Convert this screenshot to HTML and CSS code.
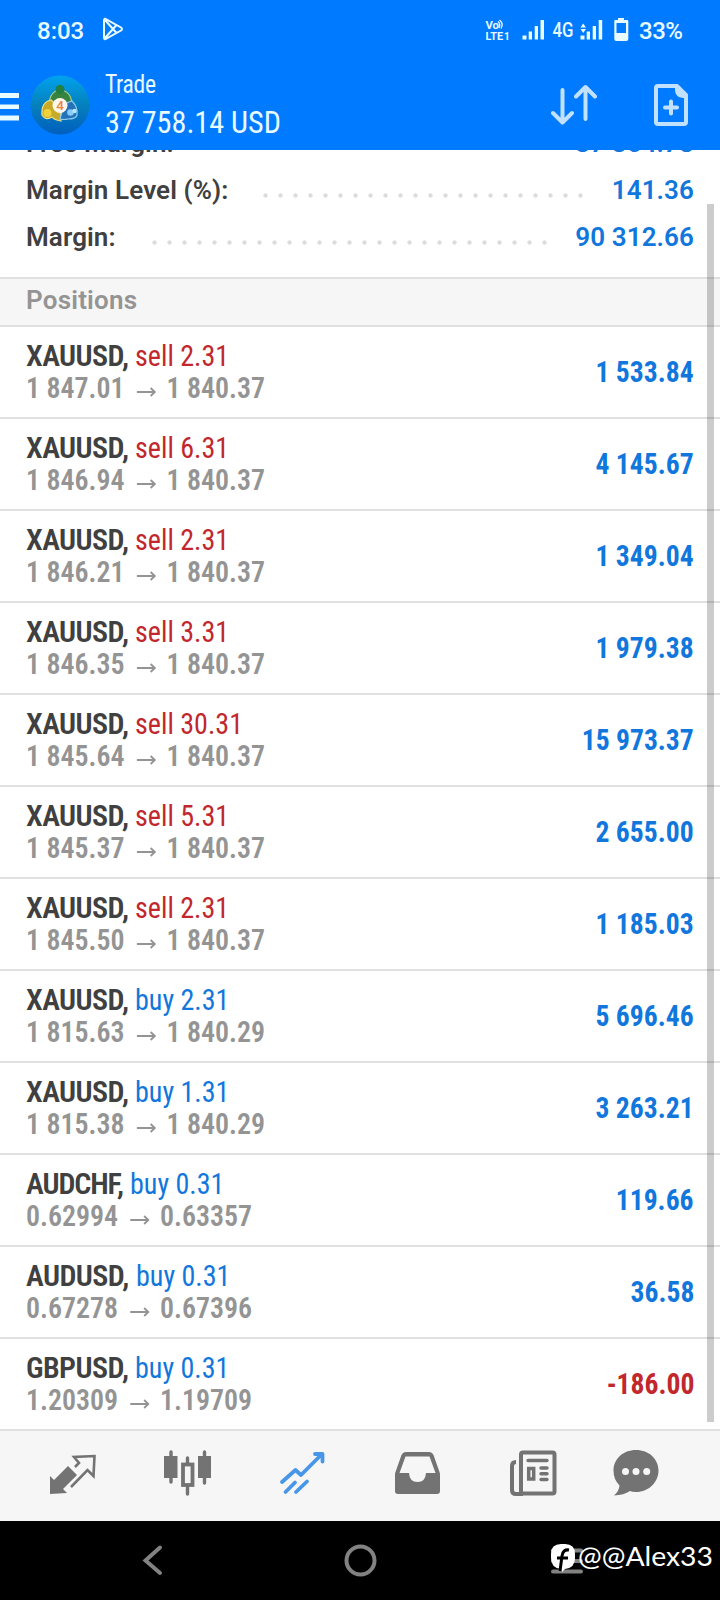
FILE: index.html
```html
<!DOCTYPE html>
<html lang="en"><head><meta charset="utf-8"><title>Trade</title><link rel="stylesheet" href="styles.css"></head>
<body>
<header class="header">
  <div class="status">
    <span class="clock">8:03</span>
    <svg class="play" width="22" height="24" viewBox="0 0 22 24"><path d="M2 3.500v17q0 2.500 2.300 1.200L19 13.500q2-1.500 0-3L4.300 2.300Q2 1 2 3.500zM3 3l11.500 13M3 21 14.500 8"/></svg>
    <svg class="signals" width="150" height="30" viewBox="0 0 150 30">
      <g font-family="Roboto, sans-serif" font-weight="700" font-size="11.500"><text x="0.500" y="13.500" textLength="13.500" lengthAdjust="spacingAndGlyphs">Vo</text><text x="0.500" y="24.500" textLength="17.500" lengthAdjust="spacingAndGlyphs">LTE</text><text x="19" y="24.500" font-size="10">1</text></g>
      <path d="M13 6.500q3 3 1 6.500M14.500 5q4.500 4 1.500 8.500" fill="none" stroke="#e8fbff" stroke-width="1.300"/>
      <path d="M37.500 20.500h4v4h-4zM43.700 16.500h3.300v8h-3.300zM49.700 11h3.300v13.500h-3.300zM55.500 5h3.500v19.500h-3.500z"/>
      <text x="67.500" y="21.700" textLength="21" lengthAdjust="spacingAndGlyphs" font-family="Roboto, sans-serif" font-weight="500" font-size="20">4G</text>
      <path d="M95.500 12.500l2.700-4 2.800 4zM95.500 14l2.700 4 2.800-4zM95.500 20.500h4v4h-4zM101.700 16.500h3.300v8h-3.300zM107.700 11h3.300v13.500h-3.300zM113.700 5h3.500v19.500h-3.500z"/>
      <path fill-rule="evenodd" d="M133 3h6v2h3q1.300 0 1.300 1v18q0 2-2 2h-10q-2 0-2-2V6q0-1 1.300-1h2.400zM131.500 8v10h9.500V8z"/>
    </svg>
    <span class="battery">33%</span>
  </div>
  <div class="appbar">
    <svg class="menu" width="19" height="28" viewBox="0 0 19 28"><path d="M0 0h19v5H0zM0 11.500h19v4.500H0zM0 22.500h19v5H0z"/></svg>
    <svg class="logo" width="60" height="60" viewBox="0 0 60 60">
      <defs><linearGradient id="disc" x1="0" y1="0" x2="0" y2="1"><stop offset="0" stop-color="#00a3ed"/><stop offset=".5" stop-color="#0580bd"/><stop offset="1" stop-color="#005fbe"/></linearGradient></defs>
      <circle cx="30" cy="30" r="29.500" fill="url(#disc)"/>
      <path d="M19 29q1-13 11-14 11 1 12 14l-6 4H24z" fill="#36843f" stroke="#a5cf8c" stroke-width="1.200"/>
      <circle cx="30" cy="14.500" r="4.500" fill="#237f42"/>
      <path d="M12 40q-1-13 9-15l9 8 1 13q-7-1-9-4-6 4-10-2z" fill="#c6aa28" stroke="#e9e08a" stroke-width="1.200"/>
      <circle cx="17.500" cy="38" r="4" fill="#f0d23c"/>
      <path d="M30 44l4-15 8-3q6 6 5 14-1 4-9 4-4 1-8 0z" fill="#2472b8" stroke="#8ccbf0" stroke-width="1.200"/>
      <circle cx="40.500" cy="37.500" r="3.300" fill="#86cdf8"/><circle cx="44.500" cy="36" r="2.200" fill="#b9e5ff"/>
      <circle cx="30" cy="30.500" r="7.500" fill="#fff6ec"/>
      <text x="30" y="35.200" text-anchor="middle" font-family="Roboto, sans-serif" font-weight="500" font-size="13.500" fill="#e58445">4</text>
    </svg>
    <div class="titles"><div class="title">Trade</div><div class="balance">37 758.14 USD</div></div>
    <svg class="sort" width="46" height="42" viewBox="0 0 46 42"><path d="M11.500 6v32M2 29l9.500 9.500 9.500-9.500M34.500 35V3M25 12.500 34.500 3l9.500 9.500"/></svg>
    <svg class="new" width="34" height="42" viewBox="0 0 34 42"><path d="M4 2h19l9 9v27q0 2-2 2H4q-2 0-2-2V4q0-2 2-2zM17 17.500v12M11 23.500h12" /><path class="fold" d="M21 1.500h3L33 11v3h-4q-8-1-8-8z"/></svg>
  </div>
</header>
<main class="content">
  <section class="summary">
    <div class="stat"><span>Free Margin:</span><b>37 354.78</b></div>
    <div class="stat"><span>Margin Level (%):</span><i class="dots level"></i><b>141.36</b></div>
    <div class="stat"><span>Margin:</span><i class="dots margin"></i><b>90 312.66</b></div>
  </section>
  <h2 class="section">Positions</h2>
  <ul class="positions" id="positions"></ul>
  <div class="scrollbar"></div>
</main>
<nav class="tabs">
  <svg width="720" height="88" viewBox="0 1432 720 88">
    <g fill="#737373"><path d="M50 1477l4 4 14-14 9 9-14 14 4 4-17 1z"/>
    <path d="M75 1468l4-4-5-6 20.500-1-1 20-6-6-16.500 17" fill="none" stroke="#737373" stroke-width="2.600"/></g>
    <g fill="#737373" stroke="#737373" stroke-linecap="round" stroke-width="3.400"><path d="M171 1453v30M204.500 1453v31M187.500 1459v5M187.500 1488v7"/><rect x="165.500" y="1458.500" width="10.500" height="19" stroke-width="3"/><rect x="199.500" y="1458.500" width="10" height="19" stroke-width="3"/><rect x="183" y="1465.500" width="9.500" height="20.500" fill="none" stroke-width="3.800"/></g>
    <g fill="none" stroke="#4796e8" stroke-width="3.800" stroke-linecap="round" stroke-linejoin="round"><path d="M282 1483l13.500-12 5.500 5 21-21M315 1455h7.500v7.500M285.500 1493l9.500-9.500M296 1493l11-10.500"/></g>
    <path fill="#737373" fill-rule="evenodd" d="M406 1453h23q3 0 4.500 3l6 17q.5 1 .5 3v16q0 3-3 3h-39q-3 0-3-3v-16q0-2 .5-3l6-17q1.500-3 4.500-3zM405.500 1457.500l-6 16.500h9.500q.5 9 8.500 9t8.500-9h9.500l-6-16.500z"/>
    <g fill="none" stroke="#737373" stroke-width="4"><path d="M516 1463q-4 0-4 4v24q0 4 4 4h7"/><rect x="521" y="1453.500" width="33.500" height="41" rx="2"/><path d="M528 1461.500h19M541 1469h6M541 1474.700h6M541 1480.500h6" stroke-width="3.400" stroke-linecap="round"/><path d="M528.700 1469.500h5v10.500h-5z" stroke-width="3.500"/></g>
    <path fill="#737373" d="M636 1451c13 0 22.500 9 22.500 20.500S649 1493 636 1493q-4 0-6-1-6 4-16 4.500 5-4 5.500-10-6-6-6-15c0-11.500 9.500-20.500 22.500-20.500z"/><g fill="#f5f5f5"><circle cx="625.500" cy="1472.500" r="3.500"/><circle cx="636" cy="1472.500" r="3.500"/><circle cx="646.700" cy="1472.500" r="3.500"/></g>
  </svg>
</nav>
<footer class="sysnav">
  <svg width="720" height="79" viewBox="0 1521 720 79">
    <g fill="none" stroke="#828282" stroke-width="4" stroke-linecap="round"><path d="M160 1547.500 145.500 1560.500 160 1573"/><circle cx="360.500" cy="1560.500" r="14"/><path d="M553 1550.500h28M553 1561h28M553 1571.500h28"/></g>
    <path fill="#fff" d="M561 1544h4q10 0 10 10v4q0 10-10 11l-3 3-1-3q-10-1-10-11v-4q0-10 10-10z"/>
    <path d="M569 1550q-6-1-7 6l-2 15M557 1558h11" fill="none" stroke="#000" stroke-width="3"/>
    <text x="578" y="1565.500" textLength="135" lengthAdjust="spacingAndGlyphs" font-family="Lato, sans-serif" font-size="27.500" fill="#fff">@@Alex33</text>
  </svg>
</footer>
<script src="positions.js"></script>
</body></html>
```

FILE: styles.css
```css
* { box-sizing: border-box; }
body { margin: 0; width: 720px; height: 1600px; overflow: hidden; display: flex; flex-direction: column; background: #fff; font-family: Roboto, sans-serif; color: #404040; }
svg { display: block; flex: none; }
.header { height: 150px; flex: none; background: #007aff; color: #e8fbff; position: relative; z-index: 2; }
.status { height: 60px; display: flex; align-items: center; padding: 1px 20px 0 37px; font-size: 24px; font-weight: 500; }
.clock { width: 65px; flex: none; }
.play { fill: none; stroke: #e8fbff; stroke-width: 2; margin-top: -3px; }
.signals { margin: -1px 0 0 361px; fill: #e8fbff; }
.battery { margin-left: 4px; letter-spacing: -.5px; }
.appbar { height: 90px; display: flex; align-items: flex-start; }
.menu { fill: #e8fbff; margin-top: 33px; }
.logo { margin: 15px 0 0 11px; }
.titles { margin: 9px 0 0 15px; width: 446px; font-family: "Roboto Condensed", Roboto, sans-serif; font-stretch: 75%; transform: scaleX(.943); transform-origin: left; }
.title { font-size: 25px; line-height: 32px; letter-spacing: -.3px; }
.balance { font-size: 32px; line-height: 42px; }
.sort, .new { fill: none; stroke: #c2e1ff; stroke-width: 4; stroke-linecap: round; stroke-linejoin: round; }
.sort { margin-top: 24px; }
.new { margin: 24px 0 0 57px; }
.new .fold { fill: #c2e1ff; stroke: none; }
.content { height: 1280px; flex: none; position: relative; }
.summary { height: 127px; padding: 0 26px; overflow: hidden; }
.stat { height: 47px; display: flex; font-size: 26px; font-weight: 600; line-height: 47px; letter-spacing: .1px; }
.stat:first-child { margin-top: -30px; }
.stat b { font-weight: 600; color: #1177dc; margin-left: auto; }
.stat span { white-space: nowrap; }
.dots { height: 5px; margin-top: 26px; background: radial-gradient(circle, #dcdcdc 1.800px, transparent 2.500px) 0 0 / 15px 5px repeat-x; }
.level { width: 330px; position: absolute; left: 258px; }
.margin { width: 405px; position: absolute; left: 147px; }
.section { margin: 0; height: 50px; border: solid #e0e0e0; border-width: 2px 0; background: #f6f6f6; padding-left: 26px; font-size: 26px; font-weight: 600; line-height: 43px; letter-spacing: .2px; color: #949494; }
.positions { margin: 0; padding: 0; list-style: none; font-family: "Roboto Condensed", Roboto, sans-serif; font-stretch: 75%; }
.position { height: 92px; border-bottom: 2px solid #e0e0e0; padding: 13px 26px 0; display: flex; font-size: 30px; line-height: 32px; white-space: nowrap; }
.symbol { font-weight: 600; letter-spacing: -.6px; }
.symbol.audchf { letter-spacing: -1.1px; }
.sell, .buy { display: inline-block; transform: scaleX(.935); transform-origin: left; }
.sell { color: #c1272d; }
.buy { color: #1177dc; }
.prices { font-weight: 600; color: #949494; transform: scaleX(.93); transform-origin: left; }
.arrow { display: inline-block; width: 21px; height: 12px; margin: 0 11px 0 13px; fill: none; stroke: #949494; stroke-width: 2; vertical-align: 0; }
.profit { margin: 16px 0 0 auto; font-weight: 700; color: #1177dc; transform: scaleX(.92); transform-origin: right; }
.loss { color: #c1272d; }
.scrollbar { position: absolute; right: 6px; top: 54px; width: 7px; height: 1218px; background: rgba(0,0,0,.2); }
.tabs { height: 91px; flex: none; background: #f6f6f6; border-top: 1px solid #e0e0e0; }
.sysnav { height: 79px; flex: none; background: #000; }
```

FILE: positions.js
```js
const positions = [
  ["XAUUSD", "sell 2.31", "1 847.01", "1 840.37", "1 533.84"],
  ["XAUUSD", "sell 6.31", "1 846.94", "1 840.37", "4 145.67"],
  ["XAUUSD", "sell 2.31", "1 846.21", "1 840.37", "1 349.04"],
  ["XAUUSD", "sell 3.31", "1 846.35", "1 840.37", "1 979.38"],
  ["XAUUSD", "sell 30.31", "1 845.64", "1 840.37", "15 973.37"],
  ["XAUUSD", "sell 5.31", "1 845.37", "1 840.37", "2 655.00"],
  ["XAUUSD", "sell 2.31", "1 845.50", "1 840.37", "1 185.03"],
  ["XAUUSD", "buy 2.31", "1 815.63", "1 840.29", "5 696.46"],
  ["XAUUSD", "buy 1.31", "1 815.38", "1 840.29", "3 263.21"],
  ["AUDCHF", "buy 0.31", "0.62994", "0.63357", "119.66"],
  ["AUDUSD", "buy 0.31", "0.67278", "0.67396", "36.58"],
  ["GBPUSD", "buy 0.31", "1.20309", "1.19709", "-186.00"]
];
const arrow = '<svg class="arrow" viewBox="0 0 21 12"><path d="M0 6h19M15 2l4.500 4-4.500 4"/></svg>';
document.getElementById("positions").innerHTML = positions.map(([symbol, order, open, now, profit]) => `
  <li class="position">
    <div><div><span class="symbol ${symbol.toLowerCase()}">${symbol},</span> <span class="${order.split(" ")[0]}">${order}</span></div>
    <div class="prices">${open}${arrow}${now}</div></div>
    <div class="profit ${profit[0] === "-" ? "loss" : ""}">${profit}</div>
  </li>`).join("");
```
